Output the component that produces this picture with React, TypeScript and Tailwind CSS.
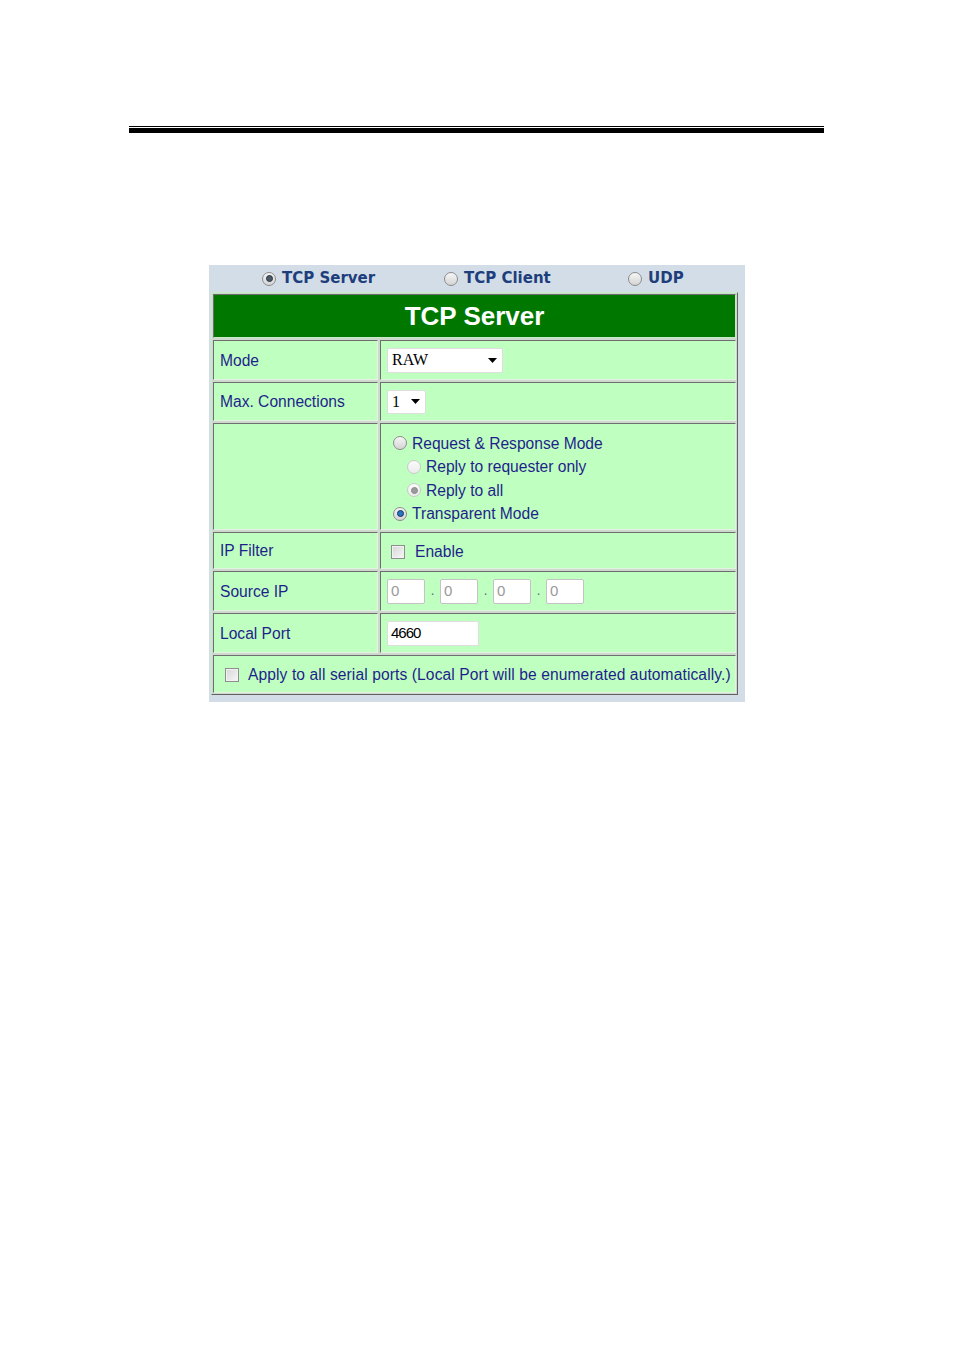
import React from "react";

const LABEL = "font-['Liberation_Sans',Arial,sans-serif] text-[15.6px] text-[#1f1f8c]";

const Radio = ({
  checked = false,
  disabled = false,
  dark = false,
}: {
  checked?: boolean;
  disabled?: boolean;
  dark?: boolean;
}) => {
  const ring = disabled
    ? "border-[#c9c9c9] from-[#fbfbfb] to-[#ececec]"
    : "border-[#8c8c8c] from-[#f6f6f6] to-[#d4d4d4]";
  const dot = disabled
    ? "bg-[#9a9a9a] border-[#8a8a8a]"
    : dark
    ? "bg-[#4a5866] border-[#2c3540]"
    : "bg-[#2a74c0] border-[#10365e]";
  return (
    <span
      className={`inline-flex shrink-0 items-center justify-center w-[14px] h-[14px] rounded-full border bg-linear-to-b ${ring}`}
    >
      {checked && <span className={`w-[7px] h-[7px] rounded-full border ${dot}`} />}
    </span>
  );
};

const Checkbox = () => (
  <span className="inline-block shrink-0 w-[14px] h-[14px] border border-[#8e8e8e] bg-linear-to-br from-[#d6d6d6] to-[#f7f7f7] shadow-[inset_0_0_0_1px_#f2f2f2]" />
);

const Arrow = () => (
  <svg width="9" height="5" viewBox="0 0 9 5" className="shrink-0">
    <path d="M0 0h9L4.5 5z" fill="#000" />
  </svg>
);

const Cell = ({ className = "", children }: { className?: string; children?: React.ReactNode }) => (
  <div
    className={`bg-[#bfffbf] border border-t-[#6e6e6e] border-l-[#6e6e6e] border-r-[#e4f2e4] border-b-[#e4f2e4] ${className}`}
  >
    {children}
  </div>
);

const Row = ({ label, h, children }: { label: string; h: string; children?: React.ReactNode }) => (
  <div className={`grid grid-cols-[165px_1fr] gap-[2px] ${h}`}>
    <Cell className="flex items-center pl-[6px] pt-px">
      <span className={LABEL}>{label}</span>
    </Cell>
    <Cell className="flex items-center pl-[6px]">{children}</Cell>
  </div>
);

const IpBox = () => (
  <div className="w-[38px] h-[25px] bg-white border border-[#c3c3c3] rounded-[2px] flex items-center pl-[3px] font-['Liberation_Sans',Arial,sans-serif] text-[15px] text-[#9a9a9a]">
    0
  </div>
);

const Dot = () => <span className="w-[15px] text-center text-[#6a6a8a] text-[12px] leading-none pt-[6px]">.</span>;

export default function App() {
  return (
    <div className="min-h-[1350px] bg-white">
      <div className="pt-[126px] pl-[129px]">
        <div className="w-[695px]">
          <div className="h-px bg-black" />
          <div className="h-px" />
          <div className="h-[5px] bg-black" />
        </div>
      </div>

      <div className="pl-[209px] pt-[132px]">
        <div className="w-[536px] bg-[#d3dde7] pb-[7px]">
          <div className="h-[27px] flex items-center pl-[53px] font-['DejaVu_Sans',Verdana,sans-serif] font-bold text-[15px] text-[#1d3e7c]">
            <div className="w-[182px] flex items-center gap-[6px]">
              <Radio checked dark />
              <span>TCP Server</span>
            </div>
            <div className="w-[184px] flex items-center gap-[6px]">
              <Radio />
              <span>TCP Client</span>
            </div>
            <div className="flex items-center gap-[6px]">
              <Radio />
              <span>UDP</span>
            </div>
          </div>

          <div className="ml-[2px] w-[527px] border border-t-[#c6eec6] border-l-[#c6eec6] border-r-[#626262] border-b-[#626262] bg-[#cdd9cd] p-px flex flex-col gap-[2px]">
            <div className="h-[44px] bg-[#007800] border border-t-[#6e6e6e] border-l-[#6e6e6e] border-r-[#c8e8c8] border-b-[#c8e8c8] flex items-center justify-center">
              <span className="font-['Liberation_Sans',Arial,sans-serif] font-bold text-[26px] text-white">
                TCP Server
              </span>
            </div>

            <Row label="Mode" h="h-[40px]">
              <div className="w-[116px] h-[25px] bg-white border border-[#dedede] rounded-[2px] flex items-center justify-between pl-[4px] pr-[5px]">
                <span className="font-['Liberation_Serif','Times_New_Roman',serif] text-[16px] text-black">RAW</span>
                <Arrow />
              </div>
            </Row>

            <Row label="Max. Connections" h="h-[39px]">
              <div className="w-[39px] h-[24px] bg-white border border-[#dedede] rounded-[2px] flex items-center justify-between pl-[4px] pr-[5px]">
                <span className="font-['Liberation_Serif','Times_New_Roman',serif] text-[16px] text-black">1</span>
                <Arrow />
              </div>
            </Row>

            <div className="grid grid-cols-[165px_1fr] gap-[2px] h-[107px]">
              <Cell />
              <Cell className="flex flex-col justify-center pl-[12px] pt-[4px]">
                <div className="flex items-center gap-[5px] h-[23.5px]">
                  <Radio />
                  <span className={LABEL}>Request &amp; Response Mode</span>
                </div>
                <div className="flex items-center gap-[5px] h-[23.5px] pl-[14px]">
                  <Radio disabled />
                  <span className={LABEL}>Reply to requester only</span>
                </div>
                <div className="flex items-center gap-[5px] h-[23.5px] pl-[14px]">
                  <Radio checked disabled />
                  <span className={LABEL}>Reply to all</span>
                </div>
                <div className="flex items-center gap-[5px] h-[23.5px]">
                  <Radio checked />
                  <span className={LABEL}>Transparent Mode</span>
                </div>
              </Cell>
            </div>

            <Row label="IP Filter" h="h-[37px]">
              <div className="flex items-center gap-[10px] pl-[4px] pt-[3px]">
                <Checkbox />
                <span className={LABEL}>Enable</span>
              </div>
            </Row>

            <Row label="Source IP" h="h-[40px]">
              <div className="flex items-stretch">
                <IpBox />
                <Dot />
                <IpBox />
                <Dot />
                <IpBox />
                <Dot />
                <IpBox />
              </div>
            </Row>

            <Row label="Local Port" h="h-[40px]">
              <div className="w-[92px] h-[25px] bg-white border border-[#dedede] rounded-[2px] flex items-center pl-[3px] font-['Liberation_Sans',Arial,sans-serif] text-[15px] tracking-[-1px] text-black">
                4660
              </div>
            </Row>

            <Cell className="h-[38px] flex items-center pl-[11px] gap-[9px] pt-[2px]">
              <Checkbox />
              <span className="font-['Liberation_Sans',Arial,sans-serif] text-[15.6px] text-[#1f1f8c] tracking-[0.1px]">
                Apply to all serial ports (Local Port will be enumerated automatically.)
              </span>
            </Cell>
          </div>
        </div>
      </div>
    </div>
  );
}
